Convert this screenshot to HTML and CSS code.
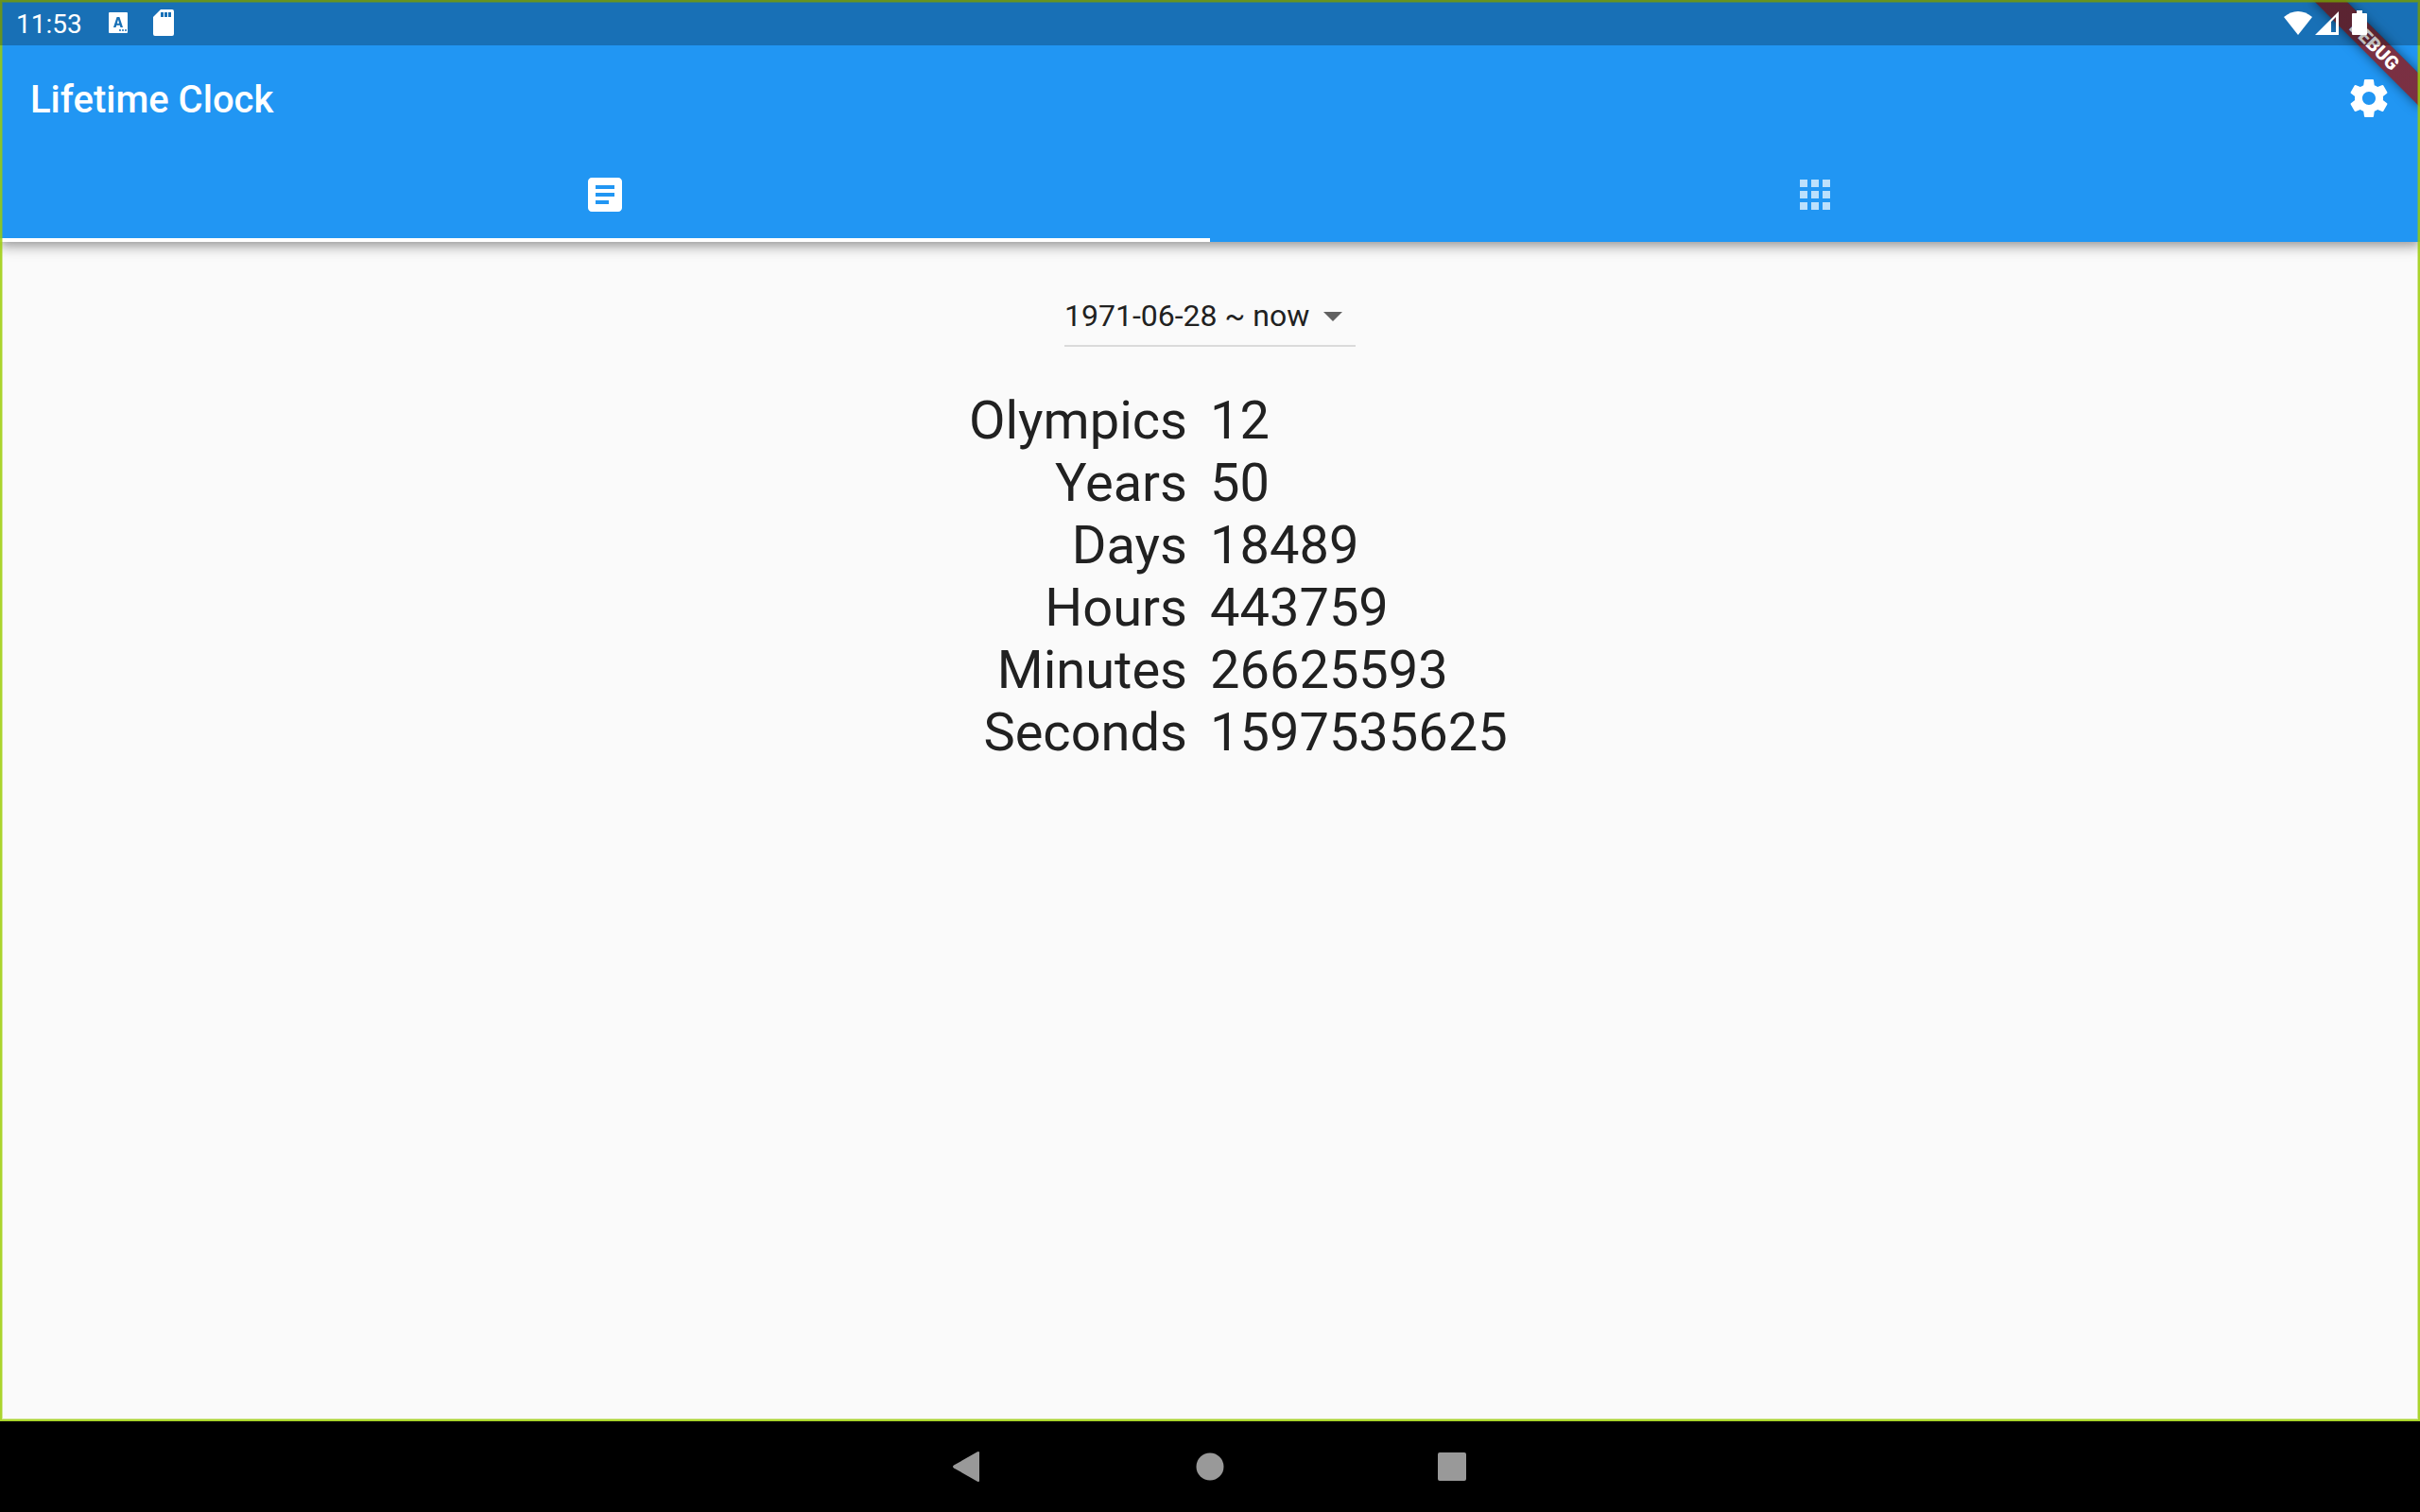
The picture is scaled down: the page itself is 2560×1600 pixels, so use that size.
FILE: index.html
```
<!DOCTYPE html>
<html lang="en">
<head>
<meta charset="utf-8">
<title>Lifetime Clock</title>
<link rel="stylesheet" href="styles.css">
</head>
<body>
<div class="app">
  <header class="app-header">
    <div class="toolbar">
      <h1 class="title">Lifetime Clock</h1>
      <button class="icon-button" type="button" aria-label="Settings">
        <svg class="icon" viewBox="0 0 24 24"><path d="M19.43 12.98c.04-.32.07-.64.07-.98s-.03-.66-.07-.98l2.11-1.65c.19-.15.24-.42.12-.64l-2-3.46c-.12-.22-.39-.3-.61-.22l-2.49 1c-.52-.4-1.08-.73-1.69-.98l-.38-2.65C14.46 2.18 14.25 2 14 2h-4c-.25 0-.46.18-.49.42l-.38 2.65c-.61.25-1.17.59-1.69.98l-2.49-1c-.23-.09-.49 0-.61.22l-2 3.46c-.13.22-.07.49.12.64l2.11 1.65c-.04.32-.07.65-.07.98s.03.66.07.98l-2.11 1.65c-.19.15-.24.42-.12.64l2 3.46c.12.22.39.3.61.22l2.49-1c.52.4 1.08.73 1.69.98l.38 2.65c.03.24.24.42.49.42h4c.25 0 .46-.18.49-.42l.38-2.65c.61-.25 1.17-.59 1.69-.98l2.49 1c.23.09.49 0 .61-.22l2-3.46c.12-.22.07-.49-.12-.64l-2.11-1.65zM12 15.5c-1.93 0-3.5-1.57-3.5-3.5s1.57-3.5 3.5-3.5 3.5 1.57 3.5 3.5-1.57 3.5-3.5 3.5z"/></svg>
      </button>
    </div>
    <nav class="tabs" role="tablist">
      <button class="tab tab-selected" type="button" role="tab" aria-selected="true" aria-label="Summary">
        <svg class="icon" viewBox="0 0 24 24"><path d="M19 3H5c-1.100 0-2 .9-2 2v14c0 1.100.9 2 2 2h14c1.100 0 2-.9 2-2V5c0-1.100-.9-2-2-2zm-5 14H7v-2h7v2zm3-4H7v-2h10v2zm0-4H7V7h10v2z"/></svg>
      </button>
      <button class="tab" type="button" role="tab" aria-selected="false" aria-label="Grid">
        <svg class="icon" viewBox="0 0 24 24"><path d="M4 8h4V4H4v4zm6 12h4v-4h-4v4zm-6 0h4v-4H4v4zm0-6h4v-4H4v4zm6 0h4v-4h-4v4zm6-10v4h4V4h-4zm-6 4h4V4h-4v4zm6 6h4v-4h-4v4zm0 6h4v-4h-4v4z"/></svg>
      </button>
    </nav>
  </header>
  <main class="content">
    <div class="period">
      <select class="period-select" aria-label="Period">
        <option>1971-06-28 ~ now</option>
      </select>
      <svg class="icon period-arrow" viewBox="0 0 24 24"><path d="M7 10l5 5 5-5z"/></svg>
    </div>
    <table class="counts">
      <tr><th scope="row">Olympics</th><td>12</td></tr>
      <tr><th scope="row">Years</th><td>50</td></tr>
      <tr><th scope="row">Days</th><td>18489</td></tr>
      <tr><th scope="row">Hours</th><td>443759</td></tr>
      <tr><th scope="row">Minutes</th><td>26625593</td></tr>
      <tr><th scope="row">Seconds</th><td>1597535625</td></tr>
    </table>
  </main>
  <div class="banner-clip"><div class="banner">DEBUG</div></div>
  <div class="frame"></div>
  <div class="status-bar">
    <span class="time">11:53</span>
    <svg class="keyboard-icon" viewBox="0 0 20 22"><path fill-rule="evenodd" d="M1 0h18q1 0 1 1v20q0 1-1 1H1q-1 0-1-1V1q0-1 1-1zM8.600 5L5 16h2.500l.8-2.300h3.400l.8 2.300H15L11.400 5zM10 7.800l1.200 4H8.800zM11 19a1 1 0 1 0 2 0a1 1 0 1 0-2 0M14 19a1 1 0 1 0 2 0a1 1 0 1 0-2 0M17 19a1 1 0 1 0 2 0a1 1 0 1 0-2 0"/></svg>
    <svg class="card-icon" viewBox="0 0 22 28"><path fill-rule="evenodd" d="M8 0h12q2 0 2 2v24q0 2-2 2H2q-2 0-2-2V8zM8 3v5h3V3zM12 3v5h3V3zM16 3v5h3V3z"/></svg>
    <div class="system-icons">
      <svg class="wifi-icon" viewBox="0 0 30 25"><path d="M15 25L0 6Q7 0 15 0t15 6z"/></svg>
      <svg class="signal-icon" viewBox="0 0 25 25"><path fill-rule="evenodd" d="M25 0v25H0zM22 6l-5 5v11h5z"/></svg>
      <svg class="battery-icon" viewBox="0 0 16 26"><path d="M5 0h6v3h4q1 0 1 1v21q0 1-1 1H1q-1 0-1-1V4q0-1 1-1h4z"/></svg>
    </div>
  </div>
</div>
<nav class="system-nav">
  <button class="nav-button" type="button" aria-label="Back"><svg class="icon" viewBox="0 0 48 48"><path d="M9 22.500L34 8.300q2-1 2 1v29.400q0 2-2 1L9 25.500q-2-1.500 0-3z"/></svg></button>
  <button class="nav-button" type="button" aria-label="Home"><svg class="icon" viewBox="0 0 48 48"><circle cx="24" cy="24" r="14.500"/></svg></button>
  <button class="nav-button" type="button" aria-label="Recent apps"><svg class="icon" viewBox="0 0 48 48"><rect x="9" y="9" width="30" height="30" rx="2"/></svg></button>
</nav>
</body>
</html>
```
FILE: styles.css
```
* { box-sizing: border-box; }

body {
  margin: 0;
  min-height: 100vh;
  display: flex;
  flex-direction: column;
  background: #000;
  color: #212121;
  font-family: Roboto, sans-serif;
}

button, select {
  border: 0;
  padding: 0;
  background: none;
  color: inherit;
  font: inherit;
}

.icon {
  display: block;
  width: 48px;
  height: 48px;
  fill: currentColor;
}

.app {
  position: relative;
  flex: 1;
  display: flex;
  flex-direction: column;
  background: #fafafa;
}

.app-header {
  padding-top: 48px;
  background: #2196f3;
  color: #fff;
  box-shadow:
    0 4px 8px -2px rgba(0, 0, 0, .2),
    0 8px 10px rgba(0, 0, 0, .14),
    0 2px 20px rgba(0, 0, 0, .12);
}

.toolbar {
  display: flex;
  align-items: center;
  justify-content: space-between;
  height: 112px;
  padding: 0 6px 0 32px;
}

.title {
  margin: 0;
  padding-top: 2px;
  font-size: 40px;
  font-weight: 500;
}

.icon-button {
  display: grid;
  place-items: center;
  width: 96px;
  height: 96px;
}

.tabs {
  display: flex;
  height: 96px;
}

.tab {
  flex: 1;
  display: grid;
  place-items: center;
  border-bottom: 4px solid transparent;
  color: rgba(255, 255, 255, .7);
}

.tab-selected {
  border-color: #fff;
  color: #fff;
}

.content {
  display: flex;
  flex-direction: column;
  align-items: center;
  padding-top: 47px;
}

.period {
  display: grid;
  align-items: center;
  border-bottom: 2px solid #dadada;
}

.period-select {
  grid-area: 1 / 1;
  appearance: none;
  height: 62px;
  padding-right: 48px;
  font-size: 32px;
}

.period-arrow {
  grid-area: 1 / 1;
  justify-self: end;
  color: #616161;
  pointer-events: none;
}

.counts {
  width: 100%;
  margin-top: 45px;
  border-collapse: collapse;
  table-layout: fixed;
  font-size: 56px;
  line-height: 66px;
}

.counts th, .counts td {
  width: 50%;
  padding: 0;
  font-weight: 400;
  text-align: left;
}

.counts th {
  padding-right: 24px;
  text-align: right;
}

/* Corner ribbon */
.banner-clip {
  position: absolute;
  top: 0;
  right: 0;
  width: 160px;
  height: 160px;
  overflow: hidden;
}

.banner {
  position: absolute;
  top: 56px;
  left: 80px;
  width: 160px;
  height: 24px;
  background:
    linear-gradient(rgba(183, 28, 28, .63), rgba(183, 28, 28, .63)),
    rgba(0, 0, 0, .45);
  box-shadow: 0 0 12px rgba(0, 0, 0, .5);
  color: #fff;
  font-size: 20px;
  font-weight: 900;
  line-height: 24px;
  text-align: center;
  transform: rotate(45deg);
  transform-origin: 80px -56px;
}

.frame {
  position: absolute;
  inset: 0;
  border: 2px solid rgba(155, 205, 7, .85);
  box-shadow: inset 0 0 0 1px rgba(155, 205, 7, .4);
  pointer-events: none;
}

.status-bar {
  position: absolute;
  inset: 0 0 auto;
  display: flex;
  align-items: center;
  height: 48px;
  padding: 0 56px 0 17px;
  background: rgba(0, 0, 0, .25);
  color: #fff;
  fill: #fff;
  font-size: 28px;
}

.time {
  padding-top: 2px;
}

.keyboard-icon {
  width: 20px;
  height: 22px;
  margin-left: 28px;
}

.card-icon {
  width: 22px;
  height: 28px;
  margin-left: 27px;
}

.system-icons {
  display: flex;
  align-items: flex-end;
  margin-left: auto;
}

.wifi-icon { width: 30px; height: 25px; }
.signal-icon { width: 25px; height: 25px; margin-left: 3px; }
.battery-icon { width: 16px; height: 26px; margin-left: 14px; }

.system-nav {
  display: flex;
  align-items: center;
  justify-content: center;
  gap: 160px;
  height: 96px;
  color: #999;
}

.nav-button {
  display: grid;
  place-items: center;
  width: 96px;
  height: 96px;
}
```
